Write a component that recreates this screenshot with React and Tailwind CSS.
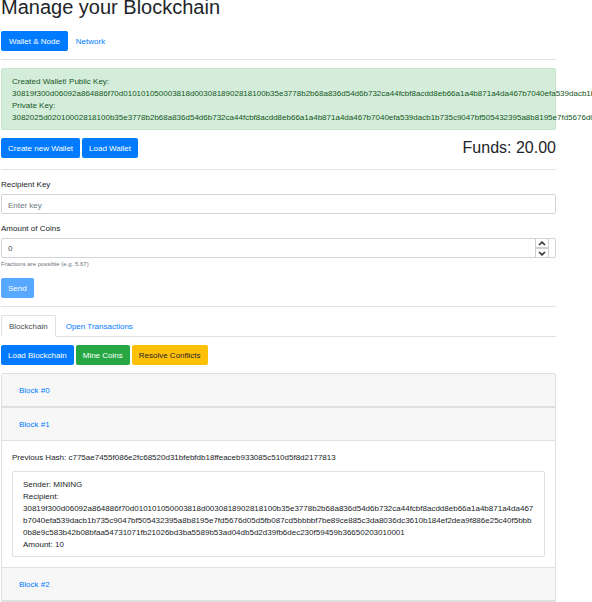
import { useState } from "react";

const PUBLIC_KEY =
  "30819f300d06092a864886f70d010101050003818d0030818902818100b35e3778b2b68a836d54d6b732ca44fcbf8acdd8eb66a1a4b871a4da467b7040efa539dacb1b735c9047bf505432395a8b8195e7fd5676d05d5fb087cd5bbbbf7be89ce885c3da8036dc3610b184ef2dea9f886e25c40f5bbb0b8e9c583b42b08bfaa54731071fb21026bd3ba5589b53ad04db5d2d39fb6dec230f59459b36650203010001";
const PRIVATE_KEY =
  "3082025d02010002818100b35e3778b2b68a836d54d6b732ca44fcbf8acdd8eb66a1a4b871a4da467b7040efa539dacb1b735c9047bf505432395a8b8195e7fd5676d05d5fb087cd5bbbbf7be89ce885c3da8036dc3610b184ef2dea9f886e25c40f5bbb";

const BLOCKS = [
  { id: 0 },
  {
    id: 1,
    previousHash: "c775ae7455f086e2fc68520d31bfebfdb18ffeaceb933085c510d5f8d2177813",
    transactions: [{ sender: "MINING", recipient: PUBLIC_KEY, amount: 10 }],
  },
  { id: 2 },
];

const TONES = {
  primary: "bg-[#007bff] text-white",
  success: "bg-[#28a745] text-white",
  warning: "bg-[#ffc107] text-[#212529]",
};

function Button({ tone = "primary", children, ...rest }) {
  return (
    <button
      type="button"
      className={`h-5 rounded-xs px-[7px] pt-0.5 disabled:opacity-65 ${TONES[tone]}`}
      {...rest}
    >
      {children}
    </button>
  );
}

function Divider() {
  return <hr className="border-t border-[#e3e3e4]" />;
}

function Chevron({ up }) {
  return (
    <svg viewBox="0 0 8 5" className="h-[5px] w-2" fill="none" stroke="#2e3436" strokeWidth="1.6" aria-hidden="true">
      <path d={up ? "M1 4 L4 1.2 L7 4" : "M1 1 L4 3.8 L7 1"} />
    </svg>
  );
}

function TransferForm() {
  const [amount, setAmount] = useState("0");
  const step = (by) => setAmount((value) => String(Number(value) + by));

  return (
    <form className="my-2">
      <label htmlFor="recipient" className="mb-[3px] block pt-px">Recipient Key</label>
      <input
        id="recipient"
        type="text"
        placeholder="Enter key"
        className="block h-5 w-full rounded-xs border border-[#ced4da] px-1.5 pt-0.5 text-[#495057] placeholder:text-[#6c757d]"
      />
      <label htmlFor="amount" className="mt-2 mb-[3px] block pt-px">Amount of Coins</label>
      <div className="flex h-5 w-full rounded-xs border border-[#ced4da] pr-1.5">
        <input
          id="amount"
          type="number"
          step="0.001"
          value={amount}
          onChange={(event) => setAmount(event.target.value)}
          className="min-w-0 flex-1 appearance-none px-1.5 pt-0.5 text-[#495057] [-moz-appearance:textfield] [&::-webkit-inner-spin-button]:appearance-none"
        />
        <div className="flex w-3.5 flex-col gap-0.5 border-x border-[#cfcfcd] bg-[#cfcfcd]">
          <button type="button" aria-label="Increase" onClick={() => step(1)} className="flex flex-1 items-center justify-center bg-white">
            <Chevron up />
          </button>
          <button type="button" aria-label="Decrease" onClick={() => step(-1)} className="flex flex-1 items-center justify-center bg-white">
            <Chevron />
          </button>
        </div>
      </div>
      <small className="mt-px mb-2 block text-[6px] leading-[11px] text-[#6c757d]">
        Fractions are possible (e.g. 5.67)
      </small>
      <Button disabled>Send</Button>
    </form>
  );
}

function Block({ block, open, onToggle }) {
  return (
    <section className="border-b border-[#dfdfdf]">
      <h2 className="flex h-[33px] items-center border-b border-[#dfdfdf] bg-[#f7f7f7] px-[17px] pt-0.5">
        <button type="button" aria-expanded={open} onClick={onToggle} className="text-[#007bff]">
          Block #{block.id}
        </button>
      </h2>
      {open && block.transactions && (
        <div className="px-2.5 pt-[11px] pb-2.5">
          <p className="mb-[7px]">Previous Hash: {block.previousHash}</p>
          {block.transactions.map((tx) => (
            <div key={tx.recipient} className="rounded-xs border border-[#dfdfdf] px-2.5 pt-[7px] pb-[5px]">
              <div>Sender: {tx.sender}</div>
              <div>Recipient:</div>
              <div className="break-all">{tx.recipient}</div>
              <div>Amount: {tx.amount}</div>
            </div>
          ))}
        </div>
      )}
    </section>
  );
}

export default function App() {
  const [openBlock, setOpenBlock] = useState(1);

  return (
    <div className="overflow-x-hidden bg-white font-['Liberation_Sans',Arial,sans-serif] text-[8px] leading-3 text-[#212529]">
      <main className="mr-9 ml-px">
        <h1 className="mb-[17px] text-[20px] leading-[14px]">Manage your Blockchain</h1>

        <nav className="mb-2 flex">
          <a href="#wallet" className="rounded-xs bg-[#007bff] px-2 pt-[5px] pb-[3px] text-white">Wallet &amp; Node</a>
          <a href="#network" className="px-2 pt-[5px] pb-[3px] text-[#007bff]">Network</a>
        </nav>
        <Divider />

        <div role="alert" className="my-2 rounded-xs border border-[#c3e6cb] bg-[#d4edda] px-2.5 pt-[7px] pb-[5px] text-[#155724]">
          <div>Created Wallet! Public Key:</div>
          <div className="whitespace-nowrap">{PUBLIC_KEY}</div>
          <div>Private Key:</div>
          <div className="whitespace-nowrap">{PRIVATE_KEY}</div>
        </div>

        <div className="mb-[11px] flex items-start justify-between">
          <div className="flex gap-0.5">
            <Button>Create new Wallet</Button>
            <Button>Load Wallet</Button>
          </div>
          <h2 className="text-[16px] leading-5">Funds: 20.00</h2>
        </div>
        <Divider />

        <TransferForm />
        <Divider />

        <nav className="mt-2 mb-2 flex gap-0.5 border-b border-[#dee2e6]">
          <a href="#blockchain" className="-mb-px rounded-t-xs border border-[#dee2e6] border-b-white bg-white px-[7px] pt-[5px] pb-[3px] text-[#495057]">
            Blockchain
          </a>
          <a href="#transactions" className="px-2 pt-1.5 pb-[3px] text-[#007bff]">Open Transactions</a>
        </nav>

        <div className="mb-2 flex gap-0.5">
          <Button>Load Blockchain</Button>
          <Button tone="success">Mine Coins</Button>
          <Button tone="warning">Resolve Conflicts</Button>
        </div>

        <div className="rounded-xs border border-[#dfdfdf]">
          {BLOCKS.map((block) => (
            <Block
              key={block.id}
              block={block}
              open={openBlock === block.id}
              onToggle={() => setOpenBlock(openBlock === block.id ? null : block.id)}
            />
          ))}
        </div>
      </main>
    </div>
  );
}
